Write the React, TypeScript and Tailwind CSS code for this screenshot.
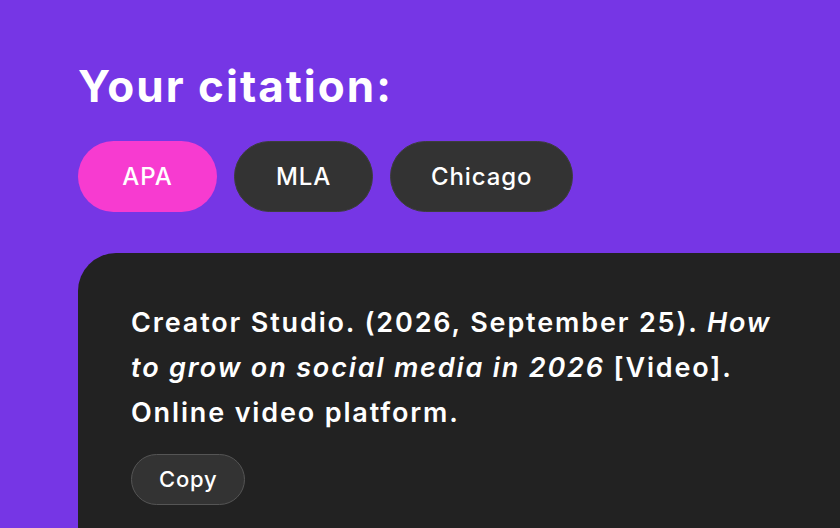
import React, { useState } from "react";

const styles = ["APA", "MLA", "Chicago"];

export default function App() {
  const [active, setActive] = useState("APA");

  return (
    <div
      className="w-[840px] h-[528px] overflow-hidden bg-[#7636e5] flex flex-col"
      style={{ fontFamily: "Inter, 'Noto Sans', sans-serif" }}
    >
      <div className="pl-[78px] pt-[58px]">
        <h1 className="text-[44px] leading-[56px] font-bold text-white tracking-[2px]">
          Your citation:
        </h1>

        <div className="flex gap-[17px] mt-[27px]">
          {styles.map((s) => (
            <button
              key={s}
              onClick={() => setActive(s)}
              className={
                s === active
                  ? "h-[71px] px-[42px] min-w-[139px] rounded-full bg-[#f73bd0] text-white text-[24px] font-medium tracking-[0.9px]"
                  : "h-[71px] px-[40px] min-w-[139px] rounded-full bg-[#333333] border border-[#3d3d3d] text-white text-[24px] font-medium tracking-[0.9px]"
              }
            >
              {s}
            </button>
          ))}
        </div>
      </div>

      <div className="ml-[78px] mt-[41px] flex-1 bg-[#222222] rounded-tl-[38px] pl-[53px] pt-[47px] pr-[40px]">
        <p className="text-white text-[27px] leading-[45px] font-semibold tracking-[1.85px] max-w-[650px]">
          Creator Studio. (2026, September 25).{" "}
          <em className="italic">How to grow on social media in 2026</em>{" "}
          [Video]. Online video platform.
        </p>

        <button className="mt-[19px] h-[51px] px-[27px] rounded-full bg-[#333333] border border-[#555555] text-white text-[22px] font-medium tracking-[0.8px]">
          Copy
        </button>
      </div>
    </div>
  );
}
